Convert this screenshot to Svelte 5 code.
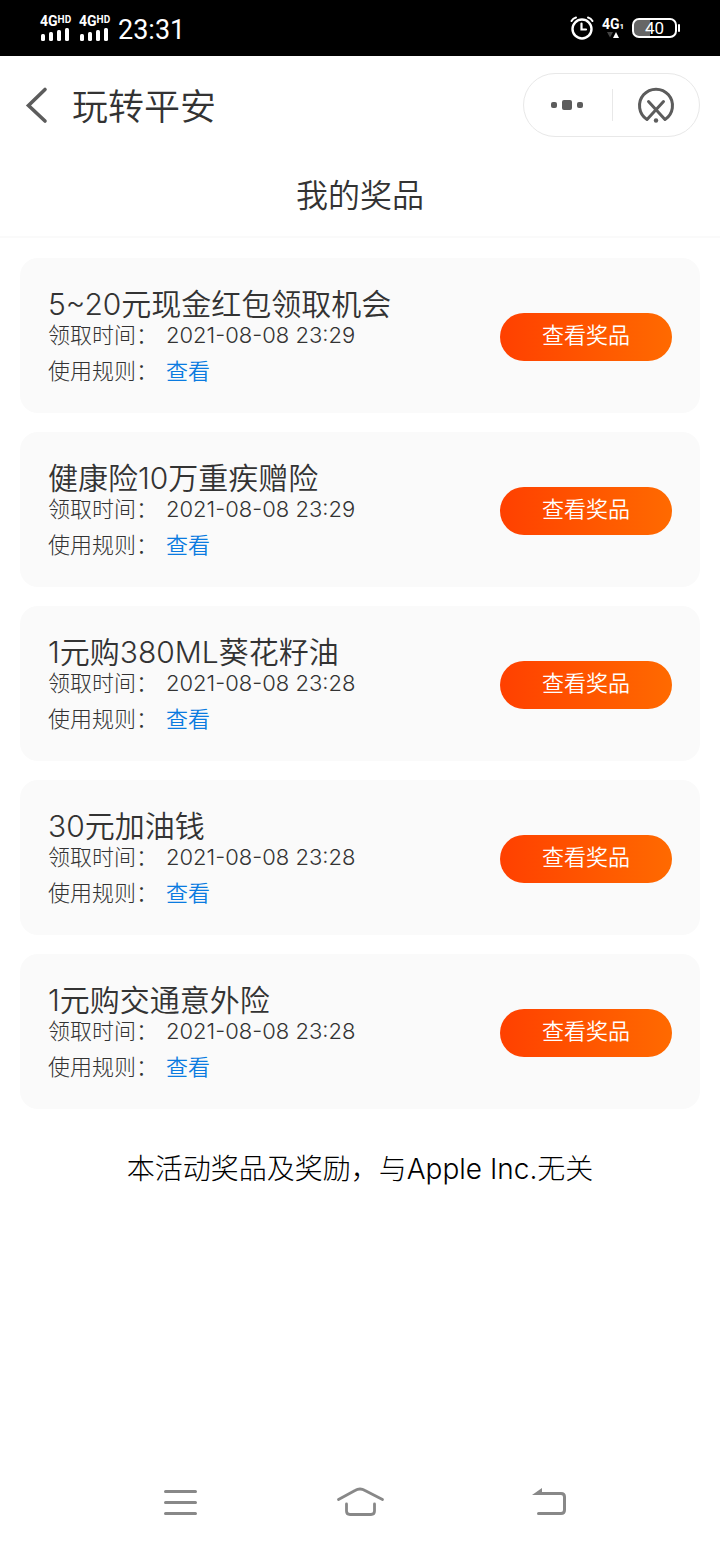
<script lang="ts">
	interface Prize {
		name: string;
		time: string;
	}

	const prizes: Prize[] = [
		{ name: '5~20元现金红包领取机会', time: '2021-08-08 23:29' },
		{ name: '健康险10万重疾赠险', time: '2021-08-08 23:29' },
		{ name: '1元购380ML葵花籽油', time: '2021-08-08 23:28' },
		{ name: '30元加油钱', time: '2021-08-08 23:28' },
		{ name: '1元购交通意外险', time: '2021-08-08 23:28' }
	];

	const sims = [1, 2];
</script>

<div class="page">
	<div class="status">
		<div class="status-left">
			{#each sims as sim (sim)}
				<div class="signal">
					<div class="network">4G<small>HD</small></div>
					<svg width="30" height="14" viewBox="0 0 30 14" fill="#fff">
						<rect x="1" y="7" width="4" height="7" rx="1.5" />
						<rect x="9" y="5" width="4" height="9" rx="1.5" />
						<rect x="17" y="3" width="4" height="11" rx="1.5" />
						<rect x="25" y="1" width="4" height="13" rx="1.5" />
					</svg>
				</div>
			{/each}
			<time class="clock">23:31</time>
		</div>
		<div class="status-right">
			<svg width="24" height="24" viewBox="0 0 24 24" fill="none" stroke="#fff" stroke-linecap="round">
				<circle cx="12" cy="13" r="9.5" stroke-width="2.4" />
				<path d="M11.5 7.5V13.5H16" stroke-width="2.2" />
				<path d="M1.5 5Q3 2.2 6 1.5M18 1.5Q21 2.2 22.5 5" stroke-width="2" />
			</svg>
			<div class="data">
				<div class="network">4G<sub>1</sub></div>
				<svg width="22" height="8" viewBox="0 0 22 8">
					<path d="M5 1h6L8 6.5z" fill="#444" />
					<path d="M11 7h6l-3-6z" fill="#fff" />
				</svg>
			</div>
			<div class="battery"><span>40</span></div>
		</div>
	</div>

	<header>
		<button class="back" aria-label="返回">
			<svg width="24" height="40" viewBox="0 0 24 40" fill="none" stroke="#5c5c5c" stroke-width="3.6" stroke-linecap="round">
				<path d="M20 4.5L3.5 20.5L20 36" />
			</svg>
		</button>
		<h1>玩转平安</h1>
		<div class="capsule">
			<button aria-label="更多">
				<svg width="34" height="12" viewBox="0 0 34 12" fill="#5c5c5c">
					<rect x="0" y="3" width="6" height="6" rx="2" />
					<rect x="11" y="1" width="10" height="10" rx="2" />
					<rect x="26" y="3" width="6" height="6" rx="2" />
				</svg>
			</button>
			<button aria-label="关闭">
				<svg width="38" height="38" viewBox="0 0 38 38" fill="none" stroke="#5c5c5c" stroke-width="3" stroke-linecap="round">
					<path d="M11.5 15.5L28 33.5A16.5 16.5 0 1 0 10 33.5L26.5 15.5" stroke-linejoin="round" />
					<circle cx="19" cy="34.5" r="2.2" fill="#5c5c5c" stroke="none" />
				</svg>
			</button>
		</div>
	</header>

	<h2>我的奖品</h2>

	<main>
		<ul>
			{#each prizes as prize}
				<li>
					<div class="info">
						<h3>{prize.name}</h3>
						<p><span>领取时间：</span><time>{prize.time}</time></p>
						<p><span>使用规则：</span><a href="#rules">查看</a></p>
					</div>
					<button class="view">查看奖品</button>
				</li>
			{/each}
		</ul>
		<p class="notice">本活动奖品及奖励，与Apple Inc.无关</p>
	</main>

	<nav>
		<button aria-label="菜单">
			<svg width="70" height="36" viewBox="0 0 70 36" fill="none" stroke="#888" stroke-width="3" stroke-linecap="round">
				<path d="M20.5 7.5H50.5M20.5 18.5H50.5M20.5 29.5H50.5" />
			</svg>
		</button>
		<button aria-label="主页">
			<svg width="50" height="36" viewBox="0 0 50 36" fill="none" stroke="#888" stroke-width="2.8" stroke-linecap="round">
				<path d="M3.5 15.5L20 6.5Q25 3.5 30 6.5L47.5 15.5" />
				<path d="M11.5 20V27Q11.5 30.5 15 30.5H36Q39.5 30.5 39.5 27V20" />
			</svg>
		</button>
		<button aria-label="返回上一页">
			<svg width="70" height="36" viewBox="0 0 70 36" fill="none" stroke="#888" stroke-width="3" stroke-linecap="round">
				<path d="M34 9.5H56Q59.5 9.5 59.5 13V26Q59.5 29.5 56 29.5H33.5" />
				<path d="M27 11L37 4V11z" fill="#888" stroke="none" />
			</svg>
		</button>
	</nav>
</div>

<style>
	:global(body) {
		background: #fff;
	}
	.page {
		display: flex;
		flex-direction: column;
		min-height: 100vh;
		color: #333;
		font-family: Inter, 'Noto Sans CJK SC', sans-serif;
		font-weight: 300;
	}
	h1,
	h2,
	h3,
	p,
	ul {
		margin: 0;
		padding: 0;
	}
	h1,
	h2,
	h3 {
		font-weight: 350;
	}
	svg {
		display: block;
	}
	button {
		padding: 0;
		border: 0;
		background: none;
		font: inherit;
		cursor: pointer;
	}
	a {
		color: #0a7be0;
		font-weight: 350;
		text-decoration: none;
	}

	.status {
		display: flex;
		justify-content: space-between;
		height: 56px;
		padding: 0 43px 0 40px;
		background: #000;
		color: #fff;
		font-family: Roboto, sans-serif;
	}
	.status-left,
	.status-right {
		display: flex;
		align-items: center;
		gap: 8px;
	}
	.signal {
		width: 31px;
	}
	.network {
		font-size: 14px;
		font-weight: 700;
		line-height: 12px;
		white-space: nowrap;
	}
	.network small {
		font-size: 10px;
		vertical-align: top;
		line-height: 10px;
	}
	.network sub {
		font-size: 8px;
		line-height: 1;
		vertical-align: baseline;
	}
	.clock {
		padding-top: 4px;
		font-size: 27px;
		font-weight: 400;
	}
	.data {
		width: 22px;
	}
	.battery {
		position: relative;
		display: flex;
		align-items: center;
		justify-content: center;
		box-sizing: border-box;
		width: 45px;
		height: 20px;
		border: 2px solid #fff;
		border-radius: 7px;
		background: linear-gradient(90deg, #666 40%, #000 40%);
		font-size: 17px;
		font-weight: 400;
	}
	.battery::after {
		content: '';
		position: absolute;
		right: -5px;
		width: 2px;
		height: 8px;
		border-radius: 1px;
		background: #fff;
	}

	header {
		display: flex;
		align-items: center;
		height: 98px;
		padding: 0 20px 0 25px;
	}
	.back {
		margin-right: 23px;
	}
	h1 {
		flex: 1;
		padding-top: 4px;
		font-size: 36px;
		line-height: 48px;
	}
	.capsule {
		display: flex;
		box-sizing: border-box;
		width: 177px;
		height: 64px;
		border: 1px solid #e8e8e8;
		border-radius: 32px;
	}
	.capsule button {
		display: flex;
		flex: 1;
		align-items: center;
		justify-content: center;
	}
	.capsule button + button::before {
		content: '';
		width: 1px;
		height: 32px;
		margin-right: 24px;
		background: #e8e8e8;
	}
	.capsule button + button {
		justify-content: flex-start;
	}
	h2 {
		padding: 18px 0 16px;
		border-bottom: 2px solid #fafafa;
		font-size: 32px;
		line-height: 48px;
		text-align: center;
	}

	main {
		flex: 1;
		padding: 20px;
	}
	ul {
		display: grid;
		gap: 19px;
		list-style: none;
	}
	li {
		display: flex;
		align-items: center;
		justify-content: space-between;
		padding: 30px 28px 27px;
		border-radius: 18px;
		background: #fafafa;
	}
	.view {
		box-sizing: border-box;
		width: 172px;
		height: 48px;
		padding-bottom: 4px;
		border-radius: 24px;
		background: linear-gradient(90deg, #ff4000, #ff6a00);
		color: #fff;
		font-size: 22px;
		font-weight: 350;
		line-height: 44px;
	}
	h3 {
		font-size: 30px;
		line-height: 32px;
	}
	.info p {
		display: flex;
		gap: 8px;
		font-size: 22px;
		line-height: 30px;
	}
	.info p + p {
		margin-top: 6px;
	}
	.notice {
		padding-top: 40px;
		color: #000;
		font-size: 28px;
		line-height: 40px;
		text-align: center;
	}

	nav {
		display: flex;
		justify-content: space-between;
		padding: 24px 145px;
	}
</style>
